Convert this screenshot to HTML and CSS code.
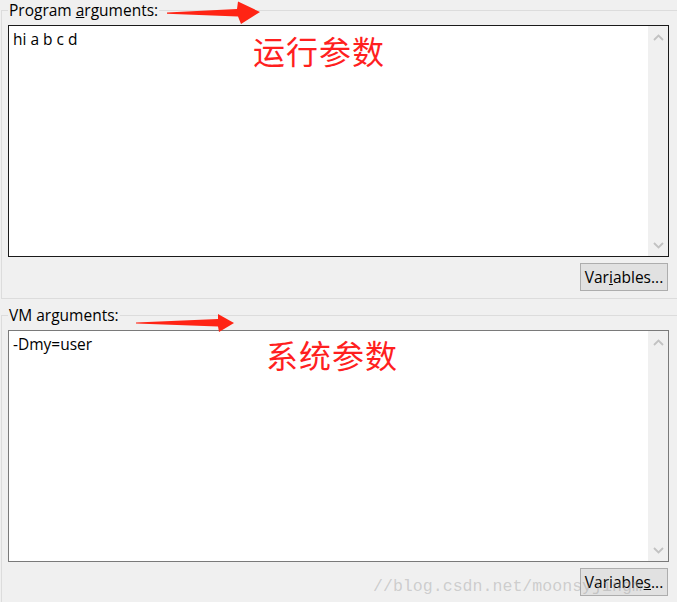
FILE: index.html
```html
<!DOCTYPE html>
<html lang="zh">
<head>
<meta charset="utf-8">
<title>Arguments</title>
<link rel="stylesheet" href="styles.css">
</head>
<body>
<div class="page">
  <fieldset class="group group-program">
    <legend class="legend">Program <u>a</u>rguments:</legend>
    <div class="editor editor-focused">
      <div class="editor-text">hi a b c d</div>
      <div class="scrollbar">
        <svg class="chev" width="11" height="7" viewBox="0 0 11 7"><polyline points="1,6 5.5,1.5 10,6" fill="none" stroke="#c2c2c2" stroke-width="1.8"/></svg>
        <svg class="chev" width="11" height="7" viewBox="0 0 11 7"><polyline points="1,1 5.5,5.5 10,1" fill="none" stroke="#c2c2c2" stroke-width="1.8"/></svg>
      </div>
    </div>
    <div class="actions">
      <button class="btn">Var<u>i</u>ables...</button>
    </div>
    <svg class="arrow arrow-1" width="100" height="26" viewBox="0 0 100 26"><polygon points="0,11.5 70,8 71,0.5 93,11 74,23 71,15.5 0,12.8" fill="#ff2414"/></svg>
    <div class="note note-1">运行参数</div>
  </fieldset>

  <fieldset class="group group-vm">
    <legend class="legend">VM arguments:</legend>
    <div class="editor">
      <div class="editor-text">-Dmy=user</div>
      <div class="scrollbar">
        <svg class="chev" width="11" height="7" viewBox="0 0 11 7"><polyline points="1,6 5.5,1.5 10,6" fill="none" stroke="#c2c2c2" stroke-width="1.8"/></svg>
        <svg class="chev" width="11" height="7" viewBox="0 0 11 7"><polyline points="1,1 5.5,5.5 10,1" fill="none" stroke="#c2c2c2" stroke-width="1.8"/></svg>
      </div>
    </div>
    <div class="actions">
      <button class="btn">Variable<u>s</u>...</button>
    </div>
    <svg class="arrow arrow-2" width="100" height="20" viewBox="0 0 100 20"><polygon points="0,8.5 82,5 82,0 98,9 83,18 82,12.5 0,9.6" fill="#ff2414"/></svg>
    <div class="note note-2">系统参数</div>
    <div class="watermark">//blog.csdn.net/moonsyjingm</div>
  </fieldset>
</div>
</body>
</html>
```
FILE: styles.css
```css
html, body {
  margin: 0;
  padding: 0;
}
body {
  background: #f0f0f0;
  width: 677px;
  height: 602px;
  overflow: hidden;
  font-family: "Open Sans", "Noto Sans CJK SC", sans-serif;
  font-size: 15.5px;
  color: #000;
}
.page {
  position: relative;
  width: 677px;
  height: 602px;
  overflow: hidden;
}
.group {
  position: relative;
  margin: 0 0 0 1px;
  padding: 4px 0 7px 6px;
  width: 677px;
  border: 1px solid #dcdcdc;
  box-sizing: border-box;
  min-width: 0;
}
.group-vm {
  margin-top: 6px;
}
.legend {
  padding: 0 1px;
  height: 21px;
  line-height: 21px;
  color: #000;
}
.editor {
  display: flex;
  width: 661px;
  height: 232px;
  box-sizing: border-box;
  border: 1px solid #7a7a7a;
  background: #fff;
}
.editor-focused {
  border-color: #1a1a1a;
}
.editor-text {
  flex: 1;
  padding: 3px 4px;
  line-height: 20px;
}
.scrollbar {
  width: 20px;
  background: #f0f0f0;
  display: flex;
  flex-direction: column;
  justify-content: space-between;
  align-items: center;
  padding: 8px 0 7px;
}
.chev {
  display: block;
}
.actions {
  width: 660px;
  display: flex;
  justify-content: flex-end;
  margin-top: 6px;
}
.btn {
  width: 88px;
  height: 28px;
  padding: 0;
  background: #e1e1e1;
  border: 1px solid #adadad;
  font-family: "Open Sans", sans-serif;
  font-size: 15.5px;
  color: #000;
  line-height: 26px;
}
.arrow {
  position: absolute;
  display: block;
}
.arrow-1 {
  left: 165px;
  top: -20px;
}
.arrow-2 {
  left: 134px;
  top: -12px;
}
.note {
  position: absolute;
  font-family: "Noto Sans CJK SC", sans-serif;
  font-size: 32px;
  line-height: 32px;
  color: #ff1f1f;
  letter-spacing: 1px;
}
.note-1 {
  left: 251px;
  top: 13px;
}
.note-2 {
  left: 264px;
  top: 12px;
}
.watermark {
  position: absolute;
  left: 371px;
  top: 251px;
  font-family: "Liberation Mono", monospace;
  font-size: 16.6px;
  line-height: 20px;
  color: rgba(150, 150, 150, 0.4);
  white-space: nowrap;
  pointer-events: none;
}
```
